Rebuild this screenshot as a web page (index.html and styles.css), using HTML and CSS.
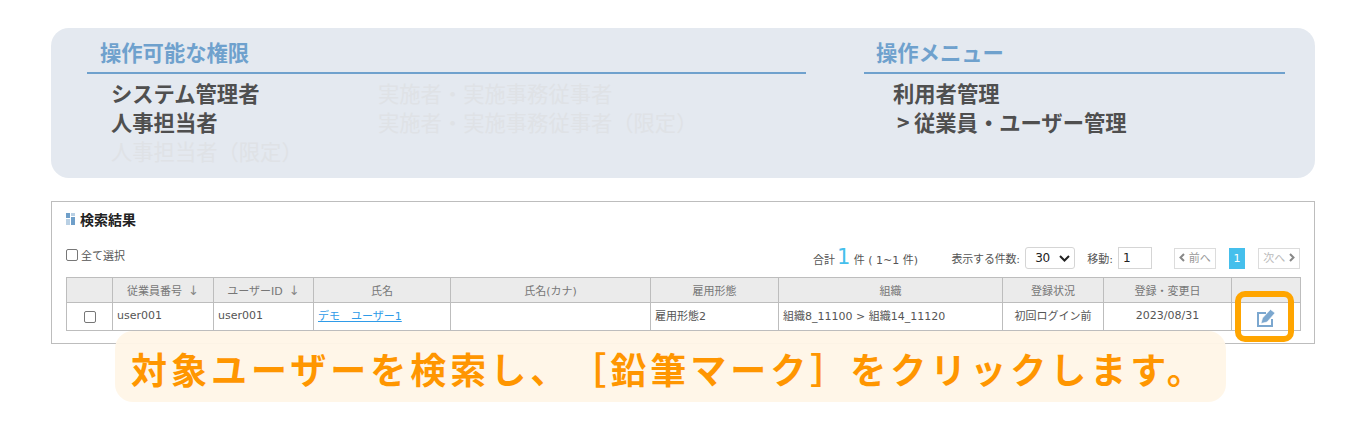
FILE: index.html
```html
<!DOCTYPE html>
<html lang="ja">
<head>
<meta charset="utf-8">
<title>検索結果</title>
<link rel="stylesheet" href="styles.css">
</head>
<body>
<section class="panel">
  <div class="col col-left">
    <h2 class="col-title">操作可能な権限</h2>
    <div class="roles">
      <div class="role-col role-col-a">
        <p class="item on">システム管理者</p>
        <p class="item on">人事担当者</p>
        <p class="item off">人事担当者（限定）</p>
      </div>
      <div class="role-col">
        <p class="item off">実施者・実施事務従事者</p>
        <p class="item off">実施者・実施事務従事者（限定）</p>
      </div>
    </div>
  </div>
  <div class="col col-right">
    <h2 class="col-title">操作メニュー</h2>
    <div class="menu">
      <p class="item on">利用者管理</p>
      <p class="item on"><span class="gt">&gt;</span>従業員・ユーザー管理</p>
    </div>
  </div>
</section>

<section class="results">
  <h3 class="results-title">
    <svg class="title-icon" width="9" height="12" viewBox="0 0 9 12"><rect width="4" height="5" fill="#6f9fc9"/><rect x="5" width="4" height="3" fill="#b9d0e4"/><rect y="6" width="4" height="6" fill="#b9d0e4"/><rect x="5" y="4" width="4" height="8" fill="#6f9fc9"/></svg>
    検索結果
  </h3>
  <div class="toolbar">
    <label class="select-all"><span class="check"></span>全て選択</label>
    <div class="total">合計<span class="count">1</span> 件 ( 1~1 件)</div>
    <div class="size">表示する件数:<span class="select">30<svg width="11" height="7" viewBox="0 0 11 7"><path d="M1 1l4.500 4.500L10 1" fill="none" stroke="#222" stroke-width="2"/></svg></span></div>
    <div class="move">移動:<span class="input">1</span></div>
    <div class="pager">
      <span class="page-btn"><svg width="6" height="9" viewBox="0 0 6 9"><path d="M5 1L1.500 4.500 5 8" fill="none" stroke="#888" stroke-width="2"/></svg> 前へ</span>
      <span class="page-cur">1</span>
      <span class="page-btn page-next">次へ <svg width="6" height="9" viewBox="0 0 6 9"><path d="M1 1l3.500 3.500L1 8" fill="none" stroke="#888" stroke-width="2"/></svg></span>
    </div>
  </div>
  <table class="grid">
    <colgroup>
      <col class="c1"><col class="c2"><col class="c3"><col class="c4"><col class="c5"><col class="c6"><col class="c7"><col class="c8"><col class="c9"><col class="c10">
    </colgroup>
    <thead>
      <tr>
        <th></th>
        <th>従業員番号<span class="arrow">↓</span></th>
        <th>ユーザーID<span class="arrow">↓</span></th>
        <th>氏名</th>
        <th>氏名(カナ)</th>
        <th>雇用形態</th>
        <th>組織</th>
        <th>登録状況</th>
        <th>登録・変更日</th>
        <th></th>
      </tr>
    </thead>
    <tbody>
      <tr>
        <td class="center cell-check"><span class="check"></span></td>
        <td>user001</td>
        <td>user001</td>
        <td><a href="#">デモ　ユーザー1</a></td>
        <td></td>
        <td>雇用形態2</td>
        <td>組織8_11100 &gt; 組織14_11120</td>
        <td class="center">初回ログイン前</td>
        <td class="center">2023/08/31</td>
        <td class="center cell-edit">
          <svg class="edit" width="18" height="18" viewBox="0 0 18 18">
            <path d="M9 4H1V17H15V10" fill="none" stroke="#7ba7cf" stroke-width="2"/>
            <path d="M4 14.500L5.500 9 13.500 .5 18 4 10 13z" fill="#7ba7cf" stroke="#fff" stroke-width=".6"/>
          </svg>
        </td>
      </tr>
    </tbody>
  </table>
</section>

<div class="highlight"></div>
<p class="callout">対象ユーザーを検索し、［鉛筆マーク］をクリックします。</p>
</body>
</html>
```

FILE: styles.css
```css
* { box-sizing: border-box; }
html, body { margin: 0; padding: 0; }
body {
  position: relative;
  width: 1366px;
  height: 428px;
  overflow: hidden;
  background: #fff;
  font-family: "Noto Sans CJK JP", "Noto Sans", sans-serif;
  color: #555;
  text-spacing-trim: space-all;
}
p, h2, h3 { margin: 0; }

.panel {
  display: flex;
  gap: 58px;
  margin: 28px 51px 0;
  height: 150px;
  padding: 0 30px 0 36px;
  background: #e4e9f0;
  border-radius: 18px;
}
.col-left { width: 719px; }
.col-right { width: 421px; }
.col-title {
  height: 46px;
  padding: 9px 0 0 13px;
  border-bottom: 2px solid #6fa1cd;
  font-size: 21.300px;
  line-height: 30px;
  font-weight: 700;
  color: #6fa1cd;
}
.col-right .col-title { padding-left: 12px; }
.roles { display: flex; padding: 4px 0 0 24px; }
.role-col-a { width: 267px; }
.menu { padding: 4px 0 0 29px; }
.item { font-size: 21.300px; line-height: 29px; font-weight: 700; white-space: nowrap; }
.item.on { color: #4f4f4f; }
.item.off { color: #dfe2e6; font-weight: 400; }
.gt { display: inline-block; width: 21px; padding-left: 4px; }

.results {
  margin: 23px 51px 0;
  height: 143px;
  padding: 0 14px;
  border: 1px solid #bdbdbd;
}
.results-title {
  display: flex;
  align-items: center;
  gap: 5px;
  height: 37px;
  padding-bottom: 4px;
  font-size: 14px;
  font-weight: 700;
  color: #222;
}
.toolbar {
  display: flex;
  align-items: center;
  height: 38px;
  font-family: "DejaVu Sans", "Noto Sans CJK JP", sans-serif;
  font-size: 11px;
  color: #555;
  white-space: nowrap;
}
.select-all { display: flex; align-items: center; gap: 3px; width: 749px; margin-top: -6px; }
.total { width: 139px; margin-top: -3px; }
.count { font-size: 21px; line-height: 20px; color: #45bfec; margin-left: 2px; }
.size { display: flex; align-items: center; justify-content: space-between; width: 124px; margin-right: 12px; letter-spacing: -.200px; }
.select {
  display: flex; align-items: center; justify-content: space-between;
  width: 50px; height: 22px; padding: 0 4px 0 9px;
  border: 1px solid #d5d5d5; border-radius: 3px; font-size: 12px; color: #222; background: #fff;
}
.move { display: flex; align-items: center; justify-content: space-between; width: 65px; }
.input {
  width: 34px; height: 22px; padding-left: 4px; line-height: 20px;
  border: 1px solid #d5d5d5; font-size: 12px; color: #222;
}
.pager { display: flex; align-items: center; margin-left: 22px; }
.page-btn {
  width: 42px; height: 21px; line-height: 19px; text-align: center;
  border: 1px solid #dcdcdc; color: #999; font-size: 11px;
}
.page-next { color: #bbb; }
.page-cur {
  width: 16px; height: 21px; line-height: 21px; text-align: center;
  margin: 0 13px; background: #45bfec; color: #fff;
}

.grid {
  width: 1234px; table-layout: fixed; border-collapse: collapse;
  font-family: "DejaVu Sans", "Noto Sans CJK JP", sans-serif; font-size: 11px;
}
.c1 { width: 46px; } .c2 { width: 101px; } .c3 { width: 100px; } .c4 { width: 137px; }
.c5 { width: 200px; } .c6 { width: 128px; } .c7 { width: 224px; } .c8 { width: 101px; }
.c9 { width: 128px; } .c10 { width: 69px; }
.grid th, .grid td { border: 1px solid #bdbdbd; padding: 0 4px; overflow: hidden; white-space: nowrap; }
.grid th { height: 25px; background: #ebebeb; font-weight: 400; color: #777; text-align: center; }
.grid td { height: 28px; padding-bottom: 3px; color: #555; }
.grid td.center { text-align: center; }
.grid td.cell-edit, .grid td.cell-check { padding: 0; }
.grid a { color: #2f9be8; }
.arrow { margin-left: 6px; font-size: 13px; color: #888; }
.check {
  display: inline-block; width: 12px; height: 12px; vertical-align: middle;
  border: 1px solid #777; border-radius: 2px; background: #fff;
}
.edit { display: block; margin: 3px auto 0 25px; }

.highlight {
  position: absolute; left: 1235px; top: 291px; width: 59px; height: 51px;
  border: 6px solid #ffa500; border-radius: 10px;
}
.callout {
  position: absolute; left: 115px; top: 331px; width: 1111px; height: 71px;
  padding: 12px 0 0 16px;
  background: rgba(255, 245, 231, .95); border-radius: 18px;
  color: #ff9600; font-size: 36px; line-height: 50px; font-weight: 700; letter-spacing: 4px;
  white-space: nowrap;
}
```
